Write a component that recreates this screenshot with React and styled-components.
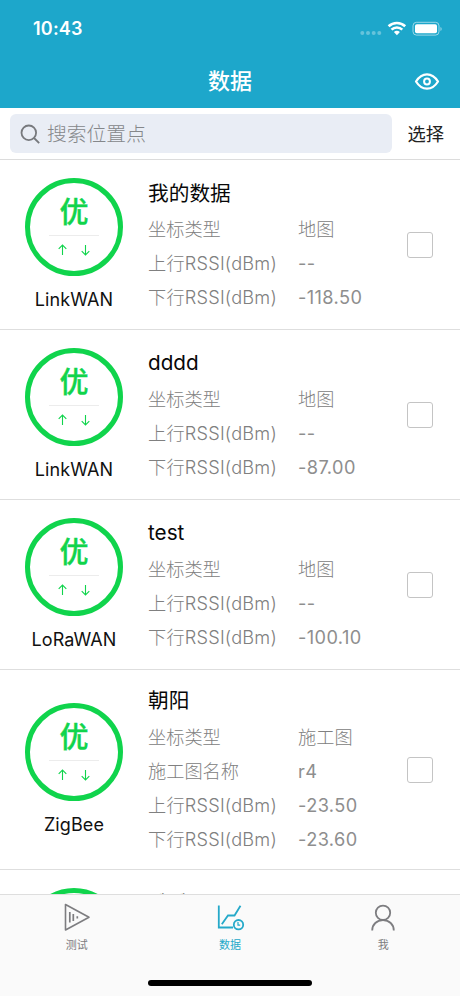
import React from "react";
import styled, { createGlobalStyle } from "styled-components";

const GlobalStyle = createGlobalStyle`
  * {
    box-sizing: border-box;
  }

  body {
    margin: 0;
    background: #fff;
    font-family: Inter, "Noto Sans CJK SC", sans-serif;
  }
`;

const Screen = styled.div`
  width: 460px;
  height: 996px;
  display: flex;
  flex-direction: column;
  overflow: hidden;
  background: #fff;
`;

const Header = styled.header`
  flex: none;
  height: 108px;
  background: #1da7cb;
  color: #fff;
`;

const StatusBar = styled.div`
  height: 54px;
  padding: 3px 18px 0 33px;
  display: flex;
  align-items: center;
  justify-content: space-between;
`;

const Time = styled.span`
  font-size: 18px;
  font-weight: 600;
  letter-spacing: 0.2px;
`;

const StatusIcons = styled.div`
  display: flex;
  align-items: center;
`;

const TitleBar = styled.div`
  height: 54px;
  padding: 0 20px;
  display: grid;
  grid-template-columns: 1fr auto 1fr;
  align-items: center;
`;

const Title = styled.h1`
  grid-column: 2;
  margin: 0;
  font-size: 22px;
  line-height: 30px;
  font-weight: 500;
`;

const EyeButton = styled.button`
  justify-self: end;
  padding: 0;
  border: 0;
  background: none;
  color: inherit;
  display: flex;
`;

const SearchBar = styled.div`
  flex: none;
  height: 52px;
  padding: 0 16px 0 10px;
  display: flex;
  align-items: center;
  justify-content: space-between;
  border-bottom: 1px solid #dcdcdc;
`;

const SearchBox = styled.div`
  width: 382px;
  height: 39px;
  padding-left: 10px;
  display: flex;
  align-items: center;
  gap: 7px;
  border-radius: 6px;
  background: #e9edf5;
  color: #85878a;
  font-size: 19.8px;
  font-weight: 300;
  line-height: 30px;
`;

const SelectLabel = styled.span`
  color: #222;
  font-size: 18.3px;
  line-height: 28px;
`;

const List = styled.main`
  flex: 1;
  min-height: 0;
  overflow: hidden;
`;

const Row = styled.section`
  height: ${(props) => (props.$tall ? 200 : 170)}px;
  padding-right: 27px;
  display: flex;
  align-items: center;
  border-bottom: 1px solid #dedede;
`;

const Badge = styled.div`
  width: 148px;
  display: flex;
  flex-direction: column;
  align-items: center;
`;

const Ring = styled.div`
  width: 98px;
  height: 98px;
  border: 5px solid #10d44c;
  border-radius: 50%;
  color: #10d44c;
  display: flex;
  flex-direction: column;
  align-items: center;
`;

const Grade = styled.span`
  height: 40px;
  margin-top: 9px;
  font-size: 29px;
  line-height: 41px;
  font-weight: 500;
  -webkit-text-stroke: 0.4px currentColor;
`;

const Arrows = styled.div`
  width: 50px;
  margin-top: 3px;
  padding: 8px 9px 0;
  display: flex;
  justify-content: space-between;
  border-top: 1px solid #ececec;
`;

const Network = styled.span`
  height: 23px;
  margin-top: 12px;
  color: #111;
  font-size: 18px;
  line-height: 24px;
  letter-spacing: 0.1px;
`;

const Info = styled.div`
  flex: 1;
  padding-top: 3px;
`;

const Name = styled.h2`
  height: 32px;
  margin: 0 0 2px;
  color: #080808;
  font-size: 20.7px;
  line-height: ${(props) => (props.$latin ? 30 : 32)}px;
  font-weight: 400;
`;

const Field = styled.div`
  height: 34.3px;
  display: grid;
  grid-template-columns: 150px 1fr;
  align-items: center;
  color: #808080;
  font-size: 18.2px;
  font-weight: 300;
  line-height: 34px;
  white-space: nowrap;
`;

const Label = styled.span`
  letter-spacing: ${(props) => (props.$latin ? "0.2px" : "0")};
`;

const Value = styled.span`
  color: ${(props) => (props.$latin ? "#8e8e8e" : "inherit")};
  font-weight: ${(props) => (props.$latin ? 400 : 300)};
  letter-spacing: ${(props) => (props.$latin ? "0.4px" : "0")};
`;

const Checkbox = styled.span`
  flex: none;
  width: 26px;
  height: 26px;
  border: 1px solid #c4c4c4;
  border-radius: 3px;
`;

const TabBar = styled.nav`
  flex: none;
  height: 102px;
  display: flex;
  flex-direction: column;
  align-items: center;
  justify-content: space-between;
  padding-bottom: 10px;
  border-top: 1px solid #dedede;
  background: #fafafa;
`;

const Tabs = styled.div`
  width: 100%;
  display: grid;
  grid-template-columns: repeat(3, 1fr);
`;

const Tab = styled.div`
  padding-top: 7px;
  display: flex;
  flex-direction: column;
  align-items: center;
  gap: 4px;
  color: ${(props) => (props.$active ? "#25a9c9" : "#7d7d80")};
  font-size: 11px;
  line-height: 18px;
`;

const HomeIndicator = styled.div`
  width: 164px;
  height: 6px;
  border-radius: 3px;
  background: #000;
`;

const StatusGlyphs = () => (
  <svg width="82" height="16" viewBox="0 0 82 16" fill="#fff">
    <g opacity="0.32">
      <circle cx="2.3" cy="12" r="2" />
      <circle cx="8" cy="12" r="2" />
      <circle cx="13.7" cy="12" r="2" />
      <circle cx="19.3" cy="12" r="2" />
    </g>
    <g fill="none" stroke="#fff" strokeWidth="2.6">
      <path d="M28.6 5.3a12 12 0 0 1 16.6 0" />
      <path d="M31.5 8.6a7.8 7.8 0 0 1 10.8 0" />
    </g>
    <path d="M33.9 11.1a4.5 4.5 0 0 1 6 0L36.9 14.3z" />
    <rect x="53" y="1.3" width="26" height="12.8" rx="3.5" fill="none" stroke="#fff" strokeOpacity="0.55" />
    <rect x="55" y="3.2" width="22" height="9" rx="1.8" />
    <path d="M80.5 6v4c1.5-.7 1.5-3.3 0-4z" opacity="0.6" />
  </svg>
);

const EyeIcon = () => (
  <svg width="26" height="20" viewBox="0 0 26 20" fill="none" stroke="#fff" strokeWidth="2.2" strokeLinejoin="round">
    <path d="M2 10.5c3-4.9 6.6-7.2 11-7.2s8 2.3 11 7.2c-3 4.9-6.6 7.2-11 7.2s-8-2.3-11-7.2z" />
    <circle cx="13" cy="10.5" r="2.9" strokeWidth="2" />
  </svg>
);

const SearchIcon = () => (
  <svg width="20" height="20" viewBox="0 0 20 20" fill="none" stroke="#77797d" strokeWidth="1.8">
    <circle cx="8.8" cy="8.8" r="7.3" />
    <path d="M14 14L19.2 19.2" />
  </svg>
);

const Arrow = ({ down }) => (
  <svg width="9" height="12" viewBox="0 0 9 12" fill="none" stroke="currentColor" strokeWidth="1.1">
    <path d={down ? "M4.5 1v10M.7 7.2l3.8 3.8 3.8-3.8" : "M4.5 11V1M.7 4.8L4.5 1l3.8 3.8"} />
  </svg>
);

const TestIcon = () => (
  <svg width="28" height="30" viewBox="0 0 28 30" fill="none" stroke="currentColor" strokeWidth="1.6" strokeLinejoin="round">
    <path d="M2.5 2.5v25.5l23.5-12.7z" />
    <path d="M6.8 10v10.5M10.3 12v7M14.3 14.2v2.3" strokeWidth="1.7" />
  </svg>
);

const ChartIcon = () => (
  <svg width="30" height="30" viewBox="0 0 30 30" fill="none" stroke="currentColor" strokeWidth="1.8">
    <path d="M3.8 3.5v22H18" />
    <path d="M6.8 22.3l6.2-8.8h6.5l6-9.8" />
    <circle cx="23.5" cy="22.7" r="4.7" />
    <path d="M23 20v3.2h2.2" strokeWidth="1.2" />
  </svg>
);

const PersonIcon = () => (
  <svg width="26" height="30" viewBox="0 0 26 30" fill="none" stroke="currentColor" strokeWidth="1.8">
    <circle cx="13" cy="10.8" r="7.2" />
    <path d="M2.2 28.5c0-6.3 4.7-10.3 10.8-10.3s10.8 4 10.8 10.3" />
  </svg>
);

const records = [
  {
    name: "我的数据",
    network: "LinkWAN",
    fields: [["坐标类型", "地图"], ["上行RSSI(dBm)", "--"], ["下行RSSI(dBm)", "-118.50"]],
  },
  {
    name: "dddd",
    network: "LinkWAN",
    fields: [["坐标类型", "地图"], ["上行RSSI(dBm)", "--"], ["下行RSSI(dBm)", "-87.00"]],
  },
  {
    name: "test",
    network: "LoRaWAN",
    fields: [["坐标类型", "地图"], ["上行RSSI(dBm)", "--"], ["下行RSSI(dBm)", "-100.10"]],
  },
  {
    name: "朝阳",
    network: "ZigBee",
    fields: [
      ["坐标类型", "施工图"],
      ["施工图名称", "r4"],
      ["上行RSSI(dBm)", "-23.50"],
      ["下行RSSI(dBm)", "-23.60"],
    ],
  },
  {
    name: "哦哦",
    network: "LinkWAN",
    fields: [["坐标类型", "地图"], ["上行RSSI(dBm)", "--"], ["下行RSSI(dBm)", "--"]],
  },
];

const isLatin = (text) => /[a-z0-9-]/i.test(text);

const Record = ({ name, network, fields }) => (
  <Row $tall={fields.length > 3}>
    <Badge>
      <Ring>
        <Grade>优</Grade>
        <Arrows>
          <Arrow />
          <Arrow down />
        </Arrows>
      </Ring>
      <Network>{network}</Network>
    </Badge>
    <Info>
      <Name $latin={isLatin(name)}>{name}</Name>
      {fields.map(([label, value]) => (
        <Field key={label}>
          <Label $latin={isLatin(label)}>{label}</Label>
          <Value $latin={isLatin(value)}>{value}</Value>
        </Field>
      ))}
    </Info>
    <Checkbox />
  </Row>
);

const App = () => {
  return (
    <>
      <GlobalStyle />
      <Screen>
        <Header>
          <StatusBar>
            <Time>10:43</Time>
            <StatusIcons>
              <StatusGlyphs />
            </StatusIcons>
          </StatusBar>
          <TitleBar>
            <Title>数据</Title>
            <EyeButton>
              <EyeIcon />
            </EyeButton>
          </TitleBar>
        </Header>
        <SearchBar>
          <SearchBox>
            <SearchIcon />
            搜索位置点
          </SearchBox>
          <SelectLabel>选择</SelectLabel>
        </SearchBar>
        <List>
          {records.map((record) => (
            <Record key={record.name} {...record} />
          ))}
        </List>
        <TabBar>
          <Tabs>
            <Tab>
              <TestIcon />
              测试
            </Tab>
            <Tab $active>
              <ChartIcon />
              数据
            </Tab>
            <Tab>
              <PersonIcon />
              我
            </Tab>
          </Tabs>
          <HomeIndicator />
        </TabBar>
      </Screen>
    </>
  );
};

export default App;
